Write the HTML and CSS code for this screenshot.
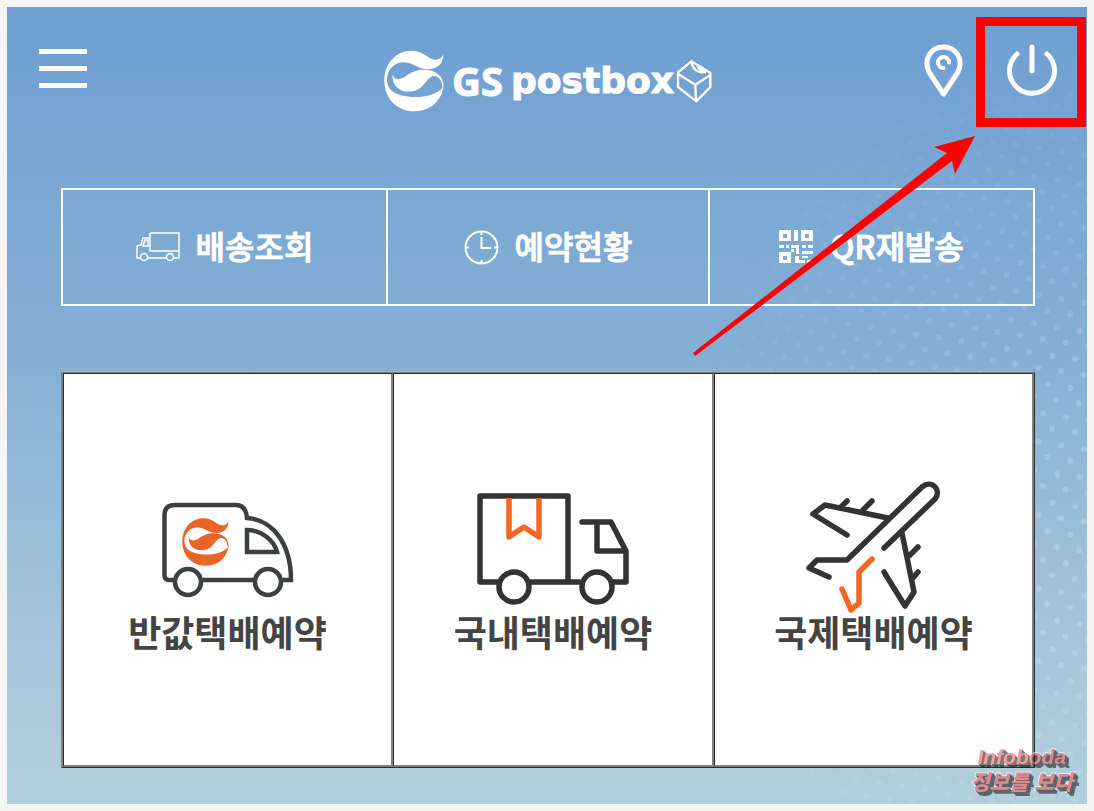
FILE: index.html
```html
<!DOCTYPE html>
<html lang="ko">
  <head>
    <meta charset="UTF-8" />
    <meta name="viewport" content="width=device-width, initial-scale=1.0" />
    <title>GS postbox</title>
    <link rel="stylesheet" href="styles.css">
  </head>

  <body>
    <div class="screen">
      <svg class="dots" aria-hidden="true">
        <defs>
          <pattern id="dot-grid" width="23" height="29" patternUnits="userSpaceOnUse" patternTransform="rotate(9)">
            <circle cx="6" cy="7" r="3" fill="#fff" />
            <circle cx="17" cy="21" r="3" fill="#fff" />
          </pattern>
        </defs>
        <rect width="100%" height="100%" fill="url(#dot-grid)" />
      </svg>

      <header class="header">
        <button class="icon-button menu" type="button" aria-label="메뉴">
          <svg width="48" height="39" viewBox="0 0 48 39" fill="#fff">
            <rect width="48" height="5" />
            <rect y="17" width="48" height="5" />
            <rect y="34" width="48" height="5" />
          </svg>
        </button>

        <a class="logo" href="#">
          <svg class="logo-mark" width="60" height="62" viewBox="0 0 180 184" fill="currentColor">
            <g id="swirl">
              <path d="M1 92C1 40 35 1 83 1C120 1 130 26 153 28C167 28 174 22 178 12C178 42 158 58 128 57C100 56 90 37 60 36C33 35 10 56 9 86C9 99 12 111 24 122C50 145 145 151 178 110C172 152 138 183 90 183C40 183 1 145 1 92Z" />
              <path d="M25 73C33 91 49 89 65 78C90 59 110 57 130 59C160 62 179 80 179 110L175 112C175 92 163 74 147 77C125 84 120 118 85 123C55 127 25 115 25 73Z" />
            </g>
          </svg>
          <span class="logo-gs">GS</span>
          <span class="logo-name">postbox</span>
          <svg class="logo-box" width="36" height="44" viewBox="0 0 108 132" fill="none" stroke="#fff" stroke-width="7" stroke-linejoin="round">
            <path d="M46 7L103 42V84L61 127L6 84V40Z" />
            <path d="M6 45L58 77L102 49M58 77L60 126M46 7C49 28 62 42 90 40M66 20C68 30 76 36 86 34" />
          </svg>
        </a>

        <div class="actions">
          <button class="icon-button" type="button" aria-label="위치">
            <svg width="39" height="54" viewBox="0 0 39 54" fill="none" stroke="#fff" stroke-width="5" stroke-linecap="round" stroke-linejoin="round">
              <path d="M19.500 50L5 28C-1 15 7 3 19.500 3S40 15 34 28Z" />
              <path d="M19.500 24A5.500 5.500 0 1 1 25 18.500" stroke-width="4" />
            </svg>
          </button>
          <button class="icon-button power" type="button" aria-label="로그인">
            <svg width="50" height="54" viewBox="0 0 50 54" fill="none" stroke="#fff" stroke-width="5" stroke-linecap="round">
              <path d="M25 3V27M10 10A22.500 22.500 0 1 0 40 10" />
            </svg>
          </button>
        </div>
      </header>

      <nav class="tabs">
        <a class="tab" href="#">
          <svg width="44" height="30" viewBox="0 0 44 30" fill="none" stroke="#fff" stroke-width="1.500">
            <path d="M14 1H43V26H38M30 26H12M4 26H1V14L5 13L7 6H14M14 1V19H43M12 8V14H7L9 8Z" />
            <circle cx="8" cy="25" r="3.500" />
            <circle cx="34" cy="25" r="3.500" />
          </svg>
          <span>배송조회</span>
        </a>
        <a class="tab" href="#">
          <svg width="35" height="35" viewBox="0 0 35 35" fill="none" stroke="#fff" stroke-width="2">
            <circle cx="17.500" cy="17.500" r="16" />
            <path d="M17.500 1V5M17.500 30V34M1 17.500H5M30 17.500H34M17.500 7V18H27" />
          </svg>
          <span>예약현황</span>
        </a>
        <a class="tab" href="#">
          <svg width="35" height="34" viewBox="0 0 35 34" fill="#fff">
            <path fill-rule="evenodd" d="M0 0H12V11H0ZM4 4V8H8V4ZM22 0H34V11H22ZM26 4V8H30V4ZM0 22H12V33H0ZM4 26V30H8V26Z" />
            <path d="M15 0H19V11H15ZM0 15H5V18H0ZM7 15H10V18H7ZM12 15H20V24H17V18H12ZM23 15H27V18H23ZM29 15H34V18H29ZM12 19H15V22H12ZM23 21H34V24H23ZM16 26H20V30H26V33H16ZM23 26H29V28H23ZM28 30H34V33H28Z" />
          </svg>
          <span>QR재발송</span>
        </a>
      </nav>

      <main class="services">
        <a class="service" href="#">
          <svg width="152" height="132" viewBox="0 0 152 132" fill="none" stroke="#3c403f" stroke-width="4.500">
            <path d="M23 99H17Q12.500 99 12.500 94V34Q12.500 24 23 24H84Q94 24 95 37C122 39 139 64 139 99H131M103 99H51" />
            <path d="M95 49V71H125C122 59 109 49 95 49Z" />
            <circle cx="36" cy="101" r="13" />
            <circle cx="116" cy="101" r="13" />
            <svg x="30" y="37" width="47" height="48" viewBox="0 0 180 184" fill="#e96425" stroke="none">
              <use href="#swirl" />
            </svg>
          </svg>
          <span>반값택배예약</span>
        </a>
        <a class="service" href="#">
          <svg width="152" height="132" viewBox="0 0 152 132" fill="none" stroke="#333" stroke-width="5.500" stroke-linecap="round" stroke-linejoin="round">
            <path d="M20 101H3V15H91V101M54 101H102M136 101H149V70L134 41H105M120 42V70H149" />
            <circle cx="37" cy="106" r="15" />
            <circle cx="120" cy="106" r="15" />
            <path d="M32 17V56L47 46L62 56V17" stroke="#f56624" stroke-linecap="butt" />
          </svg>
          <span>국내택배예약</span>
        </a>
        <a class="service" href="#">
          <svg width="152" height="132" viewBox="0 0 152 132" fill="none" stroke="#333" stroke-width="5.500" stroke-linecap="round" stroke-linejoin="round">
            <path d="M31 96L11 87L19 79H49L124 6C134 -2 144 9 137 18L86 67M49 54L15 33L27 24L90 37M43 26L49 20M65 29L74 20M104 52L116 111L107 125L86 91M111 75L120 66M114 98L120 91" />
            <path d="M74 78L61 91V122L53 129L44 108" stroke="#f56624" />
          </svg>
          <span>국제택배예약</span>
        </a>
      </main>

      <svg class="arrow" width="284" height="222" viewBox="0 0 284 222" aria-hidden="true">
        <path d="M284 0L243 11L256 17L2 217L4 220L261 25L264 38Z" fill="#f00" />
      </svg>

      <div class="watermark">
        <span>Infoboda</span>
        <span>정보를 보다</span>
      </div>
    </div>
  </body>
</html>
```
FILE: styles.css
```css
:root {
  --page-color: #f5f5f5;
  --line-gray: #808080;
  --line-dark: #2b2b2b;
  --mark-color: #ff0000;
  --font-family: "Noto Sans CJK KR", sans-serif;
}

* {
  box-sizing: border-box;
}

body {
  margin: 0;
  padding: 7px;
  font-family: var(--font-family);
  background-color: var(--page-color);
}

svg {
  display: block;
  flex-shrink: 0;
}

a {
  color: inherit;
  text-decoration: none;
}

.screen {
  position: relative;
  padding-bottom: 36px;
  color: #fff;
  background: linear-gradient(#6e9fd1, #85b0d5 44%, #a5c6dc 80%, #b1cfdb);
}

/* faded halftone on the right side */
.dots {
  position: absolute;
  inset: 0;
  width: 100%;
  height: 100%;
  opacity: 0.2;
  mask-image: radial-gradient(420px 500px at 100% 65%, #000 20%, transparent);
}

.header {
  position: relative;
  display: grid;
  grid-template-columns: 1fr auto 1fr;
  align-items: start;
  padding: 37px 30px 0 32px;
}

.icon-button {
  padding: 0;
  border: none;
  background: none;
  cursor: pointer;
}

.menu {
  justify-self: start;
  margin-top: 5px;
}

.logo {
  display: flex;
  align-items: center;
  height: 62px;
  margin-top: 6px;
  line-height: 48px;
  font-weight: bold;
  -webkit-text-stroke: 1px #fff;
}

.logo-gs {
  margin-left: 8px;
  font-family: "Open Sans", sans-serif;
  font-size: 40px;
}

.logo-name {
  margin-left: 8px;
  font-family: "DejaVu Sans", sans-serif;
  font-size: 36px;
}

.logo-box {
  margin-left: 2px;
}

.actions {
  display: flex;
  justify-content: flex-end;
  gap: 44px;
}

.power {
  position: relative;
}

.power::after {
  content: "";
  position: absolute;
  inset: -27px -29px -29px -31px;
  border: 9px solid var(--mark-color);
}

.tabs {
  position: relative;
  display: grid;
  grid-template-columns: 323fr 322fr 325fr;
  margin: 76px 52px 0 54px;
  border: 2px solid #fff;
}

.tab {
  display: flex;
  align-items: center;
  justify-content: center;
  gap: 16px;
  height: 114px;
  font-size: 32px;
  font-weight: 500;
  -webkit-text-stroke: 1px #fff;
}

.tab span {
  padding-bottom: 4px;
}

.tab + .tab {
  border-left: 2px solid #fff;
}

.services {
  position: relative;
  display: grid;
  grid-template-columns: 330fr 321fr 320fr;
  margin: 66px 52px 0 54px;
  border: solid;
  border-width: 1px 1px 1px 2px;
  border-color: var(--line-gray) var(--line-dark) var(--line-dark) var(--line-gray);
}

.service {
  display: flex;
  flex-direction: column;
  align-items: center;
  padding: 107px 0 115px;
  border: solid;
  border-width: 1px 2px 2px 1px;
  border-color: var(--line-dark) var(--line-gray) var(--line-gray) var(--line-dark);
  font-size: 36px;
  font-weight: bold;
  line-height: 37px;
  color: #444;
  background-color: #fff;
}

.arrow {
  position: absolute;
  top: 129px;
  right: 112px;
}

.watermark {
  position: absolute;
  right: 14px;
  bottom: 10px;
  display: flex;
  flex-direction: column;
  align-items: center;
  font-size: 21px;
  font-style: italic;
  font-weight: 900;
  line-height: 25px;
  color: #ff5a5a;
  opacity: 0.6;
  -webkit-text-stroke: 2px #fff;
  paint-order: stroke fill;
  text-shadow: 1px 1px #222, 2px 2px #222, 3px 3px #222, 4px 4px #222;
}

.watermark span:first-child {
  font-family: "Liberation Sans", sans-serif;
}
```
